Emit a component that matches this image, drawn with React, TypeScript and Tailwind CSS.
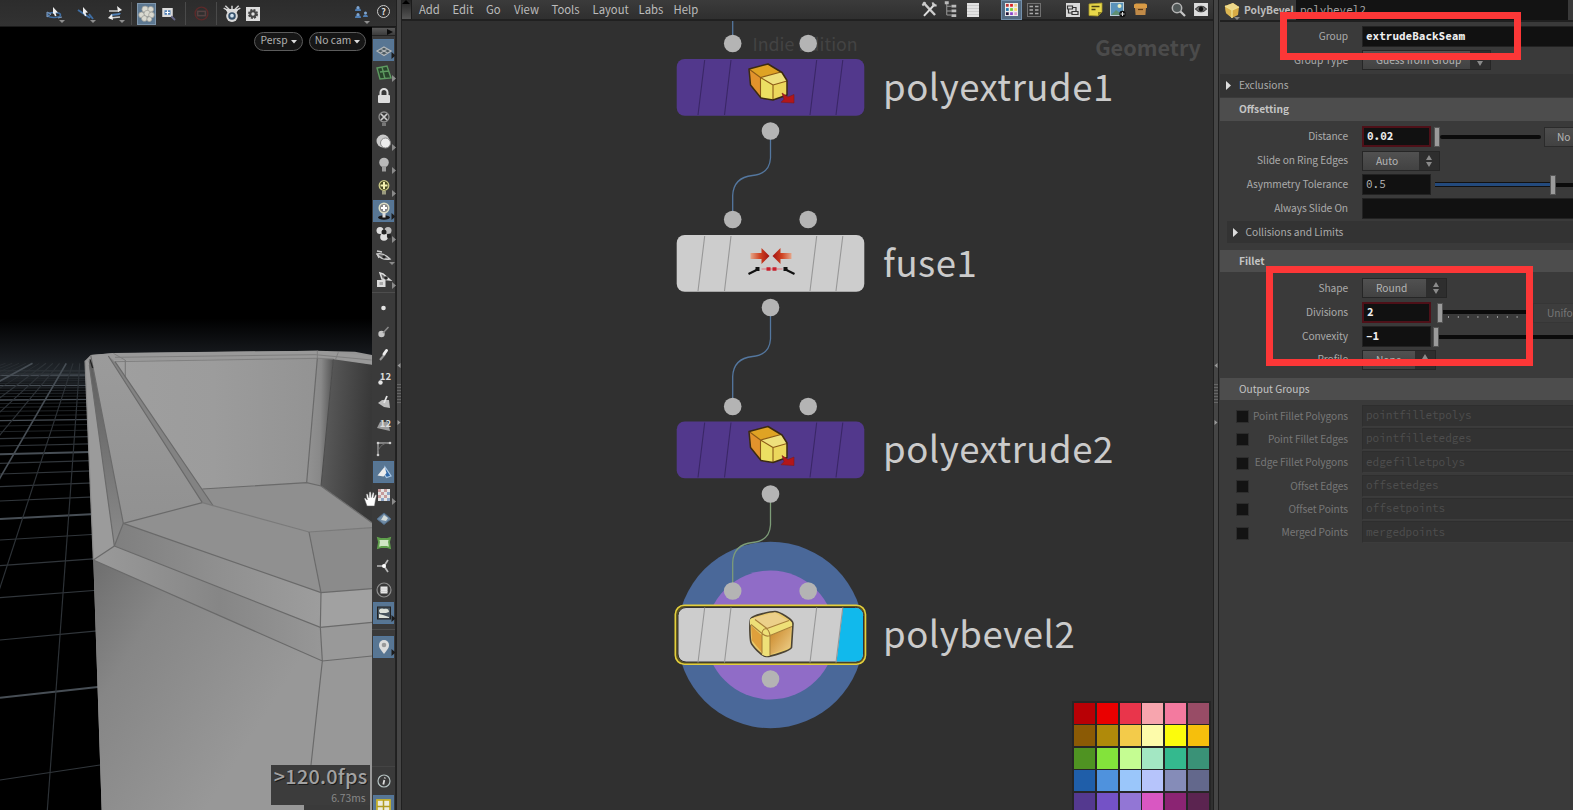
import React from "react";

const sans = "font-['Noto_Sans_CJK_SC','Noto_Sans',sans-serif]";
const mono = "font-['Source_Code_Pro','DejaVu_Sans_Mono',monospace]";

function Ico({ children, s = 20 }: { children: React.ReactNode; s?: number }) {
  return (
    <svg width={s} height={s} viewBox="0 0 24 24" fill="none" className="block shrink-0">
      {children}
    </svg>
  );
}

const blue = "#4f7fb5";
const pale = "#d4d4d4";

/* ------------------------------------------------------------------ */
/* Scene view                                                          */
/* ------------------------------------------------------------------ */

function TopTools() {
  return (
    <div className="flex h-[27px] items-center border-b border-[#1b1b1b] bg-linear-to-b from-[#2c2c2c] to-[#323232] pt-px">
      <div className="ml-[44px] w-[22px]">
        <svg width="24" height="20" viewBox="0 0 24 20" fill="none">
          <ellipse cx="10" cy="11" rx="6.5" ry="2.5" stroke="#3f6ea3" strokeWidth="1.6" />
          <path d="M3 8l4 2-4 3zM14 14l4-1" stroke="#7f9cc0" strokeWidth="1" />
          <path d="M9 3l5 5.500-2.500.2 1 3-1.500.5-1.200-2.800L9 10z" fill="#eee" />
          <path d="M15 16h6l-3 3z" fill="#8f8f8f" />
        </svg>
      </div>
      <div className="ml-[9px] w-[22px]">
        <svg width="24" height="20" viewBox="0 0 24 20" fill="none">
          <path d="M3 6l12 8M14 10l4 5" stroke="#3f6ea3" strokeWidth="2" />
          <path d="M8 3l5 5.500-2.500.2 1 3-1.500.5-1.200-2.800L8 10z" fill="#eee" />
          <path d="M15 16h6l-3 3z" fill="#8f8f8f" />
        </svg>
      </div>
      <div className="ml-[8px] w-[22px]">
        <svg width="24" height="20" viewBox="0 0 24 20" fill="none">
          <path d="M4 7h10M5 14l10-1" stroke="#ccc" strokeWidth="1.5" />
          <path d="M6 12c1-3 8 0 9-3" stroke={blue} strokeWidth="2" />
          <path d="M12 2l5 4-4 2zM7 10l-4 4 5 2z" fill="#eee" />
          <path d="M14 16h6l-3 3z" fill="#8f8f8f" />
        </svg>
      </div>
      <div className="ml-[4px] h-[23px] w-px bg-[#4a4a4a]" />
      <div className="ml-[5px] flex h-[22px] w-[19px] items-center justify-center border border-[#7f97ad] bg-[#5d7891]">
        <Ico s={17}>
          <g fill="#d9d9d0" stroke="#9c9c96" strokeWidth="1">
            <circle cx="10" cy="6" r="4.500" />
            <circle cx="18" cy="6" r="4" />
            <circle cx="5" cy="14" r="4" />
            <circle cx="13" cy="12" r="4.500" />
            <circle cx="19" cy="14" r="4" />
            <circle cx="9" cy="19" r="4" />
            <circle cx="16" cy="20" r="3.500" />
          </g>
        </Ico>
      </div>
      <div className="ml-[4px] w-[20px]">
        <Ico s={18}>
          <path d="M3 4h14v12H3z" fill="#dcdcdc" />
          <path d="M6 7h8v6H6z" fill={blue} />
          <path d="M10 7v6M7 10h6" stroke="#fff" strokeWidth="1.500" />
          <path d="M15 15l5 5" stroke="#668" strokeWidth="2.400" />
        </Ico>
      </div>
      <div className="ml-[5px] h-[23px] w-px bg-[#4a4a4a]" />
      <div className="ml-[7px] w-[18px]">
        <Ico s={17}>
          <circle cx="12" cy="12" r="9" stroke="#5c2a2a" strokeWidth="2" />
          <rect x="6.500" y="9" width="11" height="6" stroke="#554242" strokeWidth="2.200" />
        </Ico>
      </div>
      <div className="ml-[5px] h-[23px] w-px bg-[#4a4a4a]" />
      <div className="ml-[5px] w-[20px]">
        <Ico>
          <path d="M4 2l5 5M20 2l-5 5M2 5l6 3M22 5l-6 3M12 2v5" stroke={pale} strokeWidth="1.800" />
          <path d="M4 6h16l-3 5H7z" fill="#ddd" />
          <circle cx="12" cy="14.500" r="7" fill="#d9d9d9" />
          <circle cx="12" cy="14.500" r="4.500" fill="#35506a" />
          <circle cx="12" cy="14" r="2.200" fill="#cfe0ee" />
        </Ico>
      </div>
      <div className="ml-[4px] w-[16px]">
        <svg width="14" height="14" viewBox="0 0 14 14" fill="none">
          <rect width="14" height="14" fill="#dedede" />
          <circle cx="7" cy="7" r="4" stroke="#444" strokeWidth="2" strokeDasharray="2 1.140" />
          <circle cx="7" cy="7" r="2.700" stroke="#444" strokeWidth="2" />
        </svg>
      </div>
      <div className="ml-[92px] w-[18px]">
        <svg width="20" height="20" viewBox="0 0 20 20">
          <path d="M1 7a3 3 0 016 0zM1 14a3 3 0 016 0zM9 13a2.500 2.500 0 015 0z" fill={blue} />
          <circle cx="4" cy="3.500" r="1.500" fill="#7fa5d0" />
          <circle cx="4" cy="10.500" r="1.500" fill="#7fa5d0" />
          <circle cx="11.500" cy="9" r="1.500" fill="#7fa5d0" />
          <path d="M10 17h6l-3 3z" fill="#8f8f8f" />
        </svg>
      </div>
      <div className={`mb-[4px] ml-[5px] flex h-[13px] w-[13px] items-center justify-center rounded-full border border-[#ccc] ${sans} text-[9px] leading-none font-bold text-[#ddd]`}>
        ?
      </div>
    </div>
  );
}

const rows: [number, number][] = [
  [1440, 1395], [1193, 1160], [1020, 992], [893, 870], [797, 775], [720, 702], [657, 641], [603, 590],
  [560, 548], [522, 512], [490, 481], [463, 455], [438, 431], [416, 409], [395, 390], [378, 373],
  [362, 358], [348, 344], [334, 331], [322, 319], [311, 308], [300, 298], [290, 288], [281, 279],
  [272, 271], [264, 263], [257, 256], [250, 249], [243, 242], [237, 236], [231, 230], [226, 225],
  [221, 220], [216, 215], [212, 211],
];
const bright = new Set([1, 6, 11, 16, 21, 26, 31]);

function Scene() {
  const poly = (p: string, f: string, k: number) => <polygon key={k} points={p} fill={f} />;
  return (
    <svg width="372" height="783" viewBox="0 -819 1116 2349" className="block">
      <defs>
        <linearGradient id="haze" x1="0" y1="0" x2="0" y2="1">
          <stop offset="0" stopColor="#000" />
          <stop offset="0.450" stopColor="#16191d" />
          <stop offset="0.650" stopColor="#20252a" />
          <stop offset="0.850" stopColor="#0e1013" />
          <stop offset="1" stopColor="#000" />
        </linearGradient>
        <linearGradient id="wall" x1="0" y1="0" x2="1" y2="0">
          <stop offset="0" stopColor="#9f9f9f" />
          <stop offset="0.500" stopColor="#9c9c9c" />
          <stop offset="1" stopColor="#939393" />
        </linearGradient>
        <linearGradient id="round" x1="0" y1="0" x2="1" y2="0.080">
          <stop offset="0" stopColor="#949494" />
          <stop offset="0.550" stopColor="#898989" />
          <stop offset="1" stopColor="#545454" />
        </linearGradient>
        <linearGradient id="dark" x1="0" y1="0" x2="1" y2="0.200">
          <stop offset="0" stopColor="#5f5f5f" />
          <stop offset="0.350" stopColor="#515151" />
          <stop offset="1" stopColor="#383838" />
        </linearGradient>
        <linearGradient id="front" x1="0" y1="0" x2="0.800" y2="0.550">
          <stop offset="0" stopColor="#6e6e6e" />
          <stop offset="0.350" stopColor="#868686" />
          <stop offset="1" stopColor="#989898" />
        </linearGradient>
        <linearGradient id="band" x1="0" y1="0" x2="1" y2="0">
          <stop offset="0" stopColor="#7f7f7f" />
          <stop offset="0.450" stopColor="#8e8e8e" />
          <stop offset="1" stopColor="#9d9d9d" />
        </linearGradient>
        <linearGradient id="band2" x1="0" y1="0" x2="1" y2="0">
          <stop offset="0" stopColor="#9a9a9a" />
          <stop offset="0.550" stopColor="#868686" />
          <stop offset="1" stopColor="#979797" />
        </linearGradient>
        <linearGradient id="arm" x1="0" y1="0" x2="0" y2="1">
          <stop offset="0" stopColor="#9b9b9b" />
          <stop offset="1" stopColor="#919191" />
        </linearGradient>
        <linearGradient id="edge" x1="0" y1="0" x2="0" y2="1">
          <stop offset="0" stopColor="#5e5e5e" />
          <stop offset="1" stopColor="#8a8a8a" />
        </linearGradient>
      </defs>
      <rect x="0" y="-819" width="1116" height="2349" fill="#000" />
      <rect x="0" y="55" width="1116" height="240" fill="url(#haze)" />
      {rows.map(([a, b], i) => (
        <line key={a} x1="0" y1={a} x2="300" y2={b} stroke={bright.has(i) ? "#474e55" : "#31363b"} strokeWidth={bright.has(i) ? (i < 12 ? 6 : 4) : i < 14 ? 3.500 : 2} />
      ))}
      {Array.from({ length: 22 }, (_, k) => {
        const dx = 103 + k * 359;
        const t = 80 / 1420;
        return (
          <line key={k} x1={245 - dx} y1="1530" x2={245 - dx * t} y2="190" stroke={k % 5 === 2 ? "#474e55" : "#2d3237"} strokeWidth={k % 5 === 2 ? 5 : k > 5 ? 2 : 3.500} />
        );
      })}
      {[
        ["255,182 272,165 340,160 950,152 1065,155 1116,165 1116,1530 305,1530 280,780", "#959595"],
        ["330,180 375,180 952,175 920,548 607,567", "url(#wall)"],
        ["952,175 1000,178 963,558 920,548", "url(#round)"],
        ["1000,178 1116,194 1116,668 963,558", "url(#dark)"],
        ["272,165 340,159 950,152 1020,158 1116,168 1116,193 1010,177 952,172 375,180 340,178", "#999"],
        ["255,182 268,182 343,738 280,780", "#9b9b9b"],
        ["266,182 278,190 370,670 343,738", "url(#edge)"],
        ["272,165 325,168 607,608 370,670", "url(#arm)"],
        ["325,168 345,185 640,618 607,608", "#838383"],
        ["370,670 607,608 927,696 963,878", "#909090"],
        ["607,567 920,548 963,558 1116,668 1116,683 927,696 640,618", "#8f8f8f"],
        ["927,696 1116,683 1116,866 963,878", "#8b8b8b"],
        ["370,670 963,878 961,982 343,738", "url(#band)"],
        ["963,878 1116,866 1116,967 961,982", "#a1a1a1"],
        ["343,738 961,982 967,1083 280,780", "url(#band2)"],
        ["961,982 1116,967 1116,1068 967,1083", "#999"],
        ["280,780 967,1083 933,1395 915,1530 305,1530", "url(#front)"],
        ["967,1083 1116,1068 1116,1530 915,1530 933,1395", "#989898"],
      ].map(([p, f], i) => poly(p, f, i))}
      <g stroke="#6a6a6a" strokeWidth="3.500" fill="none">
        <path d="M340 160l35 20M345 185l608-10 48 2M952 152v22M1015 157l-8 20M345 172l600-8 170 16" stroke="#7f7f7f" strokeWidth="3" />
        <path d="M376 180v55" stroke="#7a7a7a" />
        <path d="M952 175l-32 373" />
        <path d="M1000 178l-37 380" stroke="#4c4c4c" strokeWidth="3" />
        <path d="M607 567l313-19 43 10 153 110" />
        <path d="M272 165l98 505M268 195l75 543" />
        <path d="M255 182l25 598" stroke="#888" />
        <path d="M270 178l8 26" stroke="#222" strokeWidth="4" />
        <path d="M325 168l282 440M345 185l295 433" />
        <path d="M370 670l237-62" />
        <path d="M607 608l320 88 189-13" stroke="#7a7a7a" />
        <path d="M927 696l36 182" />
        <path d="M370 670l593 208 153-12M370 670l-27 68-63 42M343 738l618 244 155-15" />
        <path d="M280 780l687 303 149-15M963 878l-2 104 6 101-34 312-18 135" />
      </g>
    </svg>
  );
}

const tri = <path d="M20 14v7l4-3.500z" fill="#8b8b8b" />;
const triDark = <path d="M19.500 14v7l4-3.500z" fill="#1c1c1c" />;

const sideA: [boolean, React.ReactNode][] = [
  [true, <g key="a"><path d="M12 9l7 4-7 4.500-7-4.500zM8.500 11l7 4M15.500 11l-7 4" stroke="#b4b8ba" strokeWidth="1.200" fill="#4c5a62" />{triDark}</g>],
  [false, <g key="b"><path d="M5 7l10-2 4 12-11 1zM8 11l9-1M10 6l3 12" stroke="#5d9a60" strokeWidth="1.400" fill="#28442b" />{tri}</g>],
  [false, <g key="c"><path d="M8.500 11V8.500a3.500 3.500 0 017 0V11" stroke="#ddd" strokeWidth="2" /><rect x="6" y="11" width="12" height="8" rx="1" fill="#ddd" /></g>],
  [false, <g key="d"><circle cx="12" cy="10" r="5" stroke="#8e8e8e" strokeWidth="1.300" /><path d="M9 7l6 6M15 7l-6 6" stroke="#ccc" strokeWidth="1.700" /><path d="M10 16h4v3h-4z" fill="#777" /></g>],
  [false, <g key="e"><circle cx="11" cy="11" r="6.500" fill="#c9c9c9" /><circle cx="13.500" cy="13" r="5" fill="#ececec" stroke="#8a8a8a" />{tri}</g>],
  [false, <g key="f"><circle cx="12" cy="9.500" r="4.800" fill="#b9b9b9" /><path d="M10 13h4v5.500h-4z" fill="#9c9c9c" />{tri}</g>],
  [false, <g key="g"><circle cx="12" cy="9.500" r="4.800" fill="#45451f" stroke="#c9c884" strokeWidth="1.300" /><path d="M12 6v7M8.500 9.500h7" stroke="#f2f0b0" strokeWidth="2" /><path d="M10 15h4v3.500h-4z" fill="#9b9b80" />{tri}</g>],
  [true, <g key="h"><circle cx="12" cy="9" r="4.800" fill="#888" stroke="#ddddc4" strokeWidth="1.500" /><path d="M12 6v6M9 9h6" stroke="#fff" strokeWidth="2" /><ellipse cx="12" cy="18.500" rx="6" ry="2.200" fill="#181818" /><path d="M10.500 14h3v4.500h-3z" fill="#ddd" />{triDark}</g>],
  [false, <g key="i"><circle cx="8" cy="8.500" r="3.500" fill="#ddd" /><circle cx="16" cy="8.500" r="3.500" fill="#bbb" /><circle cx="12" cy="15" r="3.800" fill="#ddd" /><circle cx="12" cy="10" r="2.500" fill="#222" /><circle cx="17" cy="14" r="2.200" fill="#222" />{tri}</g>],
  [false, <g key="j"><path d="M5 9c4-1 9 1 13 5-6 1-10-1-13-5z" stroke="#ccc" strokeWidth="1.300" fill="#666" /><circle cx="12" cy="12" r="1.600" fill="#222" /><path d="M5 6l5 1M5 9l2 4" stroke="#ccc" strokeWidth="1.300" /><path d="M17 17h6l-3 3z" fill="#8b8b8b" /></g>],
  [false, <g key="k"><path d="M8 5l3 1 7 6-8-1z" stroke="#ddd" strokeWidth="1.500" fill="#666" /><circle cx="14" cy="10" r="1.800" fill="#222" /><rect x="5" y="12" width="8.500" height="7" fill="#ddd" /><rect x="7.500" y="14" width="3.500" height="3" fill="#aaa" />{tri}</g>],
];

const sideB: [boolean, React.ReactNode][] = [
  [false, <circle key="a" cx="11.500" cy="12" r="2.300" fill="#e4e4e4" />],
  [false, <g key="b"><circle cx="9.500" cy="14" r="3.200" fill="#c5c5c5" /><path d="M11 13l5.500-6" stroke="#8a8a8a" strokeWidth="1.500" /></g>],
  [false, <g key="c"><path d="M8 17l5-6" stroke="#999" strokeWidth="2" /><path d="M12 11l2.500-3.500" stroke="#eee" strokeWidth="3" strokeLinecap="round" /></g>],
  [false, <circle key="d" cx="8.500" cy="15.500" r="2.200" fill="#e4e4e4" />],
  [false, <g key="e"><path d="M6 13l4-3 7 0 1 8-6-1z" fill="#bdbdbd" /><path d="M12 13l3-7" stroke="#e4e4e4" strokeWidth="1.800" /></g>],
  [false, <path key="f" d="M8 9l8 0 2 9-13-3z" fill="#9c9c9c" />],
  [false, <g key="g"><path d="M6 18V6h12" stroke="#9b9b9b" strokeWidth="1.400" /><path d="M6 14c2-5 5-7 9-8" stroke="#6f6f6f" /><circle cx="6" cy="6" r="1.300" fill="#ccc" /><circle cx="18" cy="6" r="1.300" fill="#ccc" /><circle cx="6" cy="18" r="1.300" fill="#ccc" /></g>],
  [true, <g key="h"><path d="M13 7l6 9-4.500 1.500-2-3z" fill="#2f68a8" stroke="#a9c8e6" strokeWidth="1.200" /><path d="M5.500 15.500l7-8.500 2 6-3 3.500z" fill="#ececec" /></g>],
  [false, <g key="i"><rect x="6" y="5" width="12" height="12" fill="#e2e2e2" /><path d="M6 5h3v3H6zM12 5h3v3h-3zM9 8h3v3H9zM6 11h3v3H6zM12 11h3v3h-3z" fill="#c49a9c" /><path d="M15 8h3v3h-3zM15 14h3v3h-3zM9 14h3v3H9z" fill="#8da4c4" />{tri}</g>],
  [false, <g key="j"><path d="M12 6l7 6-7 5.500L5 12z" fill="#6f8ba5" stroke="#4f6a86" /><path d="M12 8l4 3-2 3-5-1z" fill="#d4dbd9" /></g>],
  [false, <g key="k"><path d="M6 7l3.500 1h5L18 7l-1 4 1 6-3.500-1h-5L6 17l1-6z" fill="#cfe6c4" stroke="#5f9f4c" strokeWidth="1.800" /></g>],
  [false, <g key="l"><path d="M5 12h7M12 12l4-6M12 12l4 6" stroke="#b8b8b8" strokeWidth="1.700" /><circle cx="12" cy="12" r="2" fill="#fff" /></g>],
  [false, <g key="m"><circle cx="12" cy="12" r="7" stroke="#8d8d8d" strokeWidth="1.200" /><path d="M8.500 8.500h7v7h-7z" fill="#e6e6e6" /><path d="M8.500 11h7M8.500 13.500h7" stroke="#ccc" strokeWidth=".8" /></g>],
  [true, <g key="n"><rect x="5.500" y="6" width="13" height="12" fill="#46535c" stroke="#222" /><path d="M7 10c0-3 4-3 5-2 3-1 5 0 5 3l-3 1H8zM7 17v-4l4 1 6 2v1z" fill="#dbe0d8" />{triDark}</g>],
];

function SideCell({ on, h, children }: { on: boolean; h: string; children: React.ReactNode }) {
  return (
    <div className={`flex shrink-0 items-center justify-center ${h}`}>
      <div className={`flex h-[22px] w-[21px] items-center justify-center ${on ? "border border-[#54779b] bg-[#587693]" : ""}`}>
        <Ico s={24}>{children}</Ico>
      </div>
    </div>
  );
}

function SideBar() {
  return (
    <div className="flex w-[24px] flex-col border-r border-[#222] bg-[#3a3a3a]">
      <div className="flex h-[9px] items-center justify-end border-y border-[#222] bg-linear-to-b from-[#5a5a5a] to-[#3c3c3c] pr-[2px]">
        <svg width="6" height="6"><path d="M0 0l6 3-6 3z" fill="#0c0c0c" /></svg>
      </div>
      <div className="h-[2px]" />
      {sideA.map(([on, g], i) => <SideCell key={i} on={on} h="h-[23.100px]">{g}</SideCell>)}
      <div className="mb-[3.500px] h-px bg-[#4d4d4d]" />
      {sideB.map(([on, g], i) =>
        i === 3 || i === 5 ? (
          <div key={i} className="relative flex h-[23.450px] shrink-0 items-center justify-center">
            <Ico s={24}>{g}</Ico>
            <span className={`absolute top-[2px] right-[4px] ${sans} text-[9.500px] leading-[14px] font-bold text-[#ddd]`}>12</span>
          </div>
        ) : (
          <SideCell key={i} on={on} h="h-[23.450px]">{g}</SideCell>
        ),
      )}
      <div className="mt-[4px] mb-[6px] h-px bg-[#4d4d4d]" />
      <SideCell on h="h-[23px]">
        <path d="M12 19c-4-5-5-6.500-5-9a5 5 0 0110 0c0 2.500-1 4-5 9z" fill="#dcdcdc" />
        <circle cx="12" cy="10" r="2.300" fill="#999" />
        {triDark}
      </SideCell>
      <div className="flex-1" />
      <div className="h-px bg-[#444]" />
      <div className="flex h-[28px] shrink-0 items-center justify-center">
        <svg width="16" height="16" viewBox="0 0 16 16" fill="none">
          <circle cx="8" cy="8" r="6" stroke="#b5c2c2" strokeWidth="1.200" />
          <path d="M9 4.500l-.3 1M8.300 7l-1 4.500" stroke="#ddd" strokeWidth="1.800" />
        </svg>
      </div>
      <div className="flex h-[15px] shrink-0 items-start justify-center overflow-hidden">
        <div className="flex h-[24px] w-[21px] shrink-0 justify-center border border-[#54779b] bg-[#587693] pt-[3px]">
          <svg width="15" height="15" viewBox="0 0 15 15">
            <rect x="1" y="1" width="13" height="13" fill="#ececdc" stroke="#c9b32c" strokeWidth="1.800" />
            <path d="M7.500 1v13M1 7.500h13" stroke="#b09c22" strokeWidth="1.500" />
          </svg>
        </div>
      </div>
    </div>
  );
}

function Pill({ label, w }: { label: string; w: string }) {
  return (
    <div className={`flex h-[19px] ${w} items-center justify-center gap-[3px] rounded-full border-[1.500px] border-[#5c5c5c] bg-[#161616] ${sans} text-[10.300px] leading-none text-[#b0b0b0]`}>
      <span className="-mt-[2px]">{label}</span>
      <svg width="6" height="4"><path d="M0 0h6l-3 3.500z" fill="#ddd" /></svg>
    </div>
  );
}

function SceneView() {
  return (
    <div className="flex w-[396px] shrink-0 flex-col">
      <TopTools />
      <div className="flex h-[783px]">
        <div className="relative h-[783px] w-[372px] overflow-hidden">
          <Scene />
          <div className="absolute top-[5px] left-[254px] flex gap-[6px]">
            <Pill label="Persp" w="w-[49px]" />
            <Pill label="No cam" w="w-[57px]" />
          </div>
          <div className={`absolute top-[738px] left-[270.500px] h-[40px] w-[99px] bg-[#3c3c3c] ${sans} text-[#a2a2a2]`}>
            <div className="absolute top-[-1px] right-[2px] text-[19.800px] leading-[24px] font-medium tracking-[0.300px] [text-shadow:1px_1px_0_#1a1a1a]">&gt;120.0fps</div>
            <div className="absolute right-[4px] bottom-[0px] text-[10.300px] leading-[14px] text-[#888]">6.73ms</div>
          </div>
          <div className="absolute top-[778px] left-[304px] h-[5px] w-[66px] bg-[#3a3a3a]" />
        </div>
        <SideBar />
      </div>
      <svg width="14" height="16" viewBox="0 0 14 16" className="absolute top-[491px] left-[364px]">
        <path d="M3 15L1 9.500.3 7.500c.6-.8 1.500-.3 2.200.7L3.300 9 2.200 3.500c.5-1.200 1.500-.8 1.800.2L5 6.800 5.200 1.500c.6-1 1.600-.8 1.800.2l.3 4.800L8.500 2c.8-.8 1.600-.4 1.600.6L9.600 7l1.600-3c.9-.6 1.500 0 1.300.8L11.300 10 10.500 15z" fill="#fff" stroke="#555" strokeWidth=".5" />
      </svg>
    </div>
  );
}

function Divider() {
  return (
    <div className="flex w-[6px] shrink-0 items-center justify-center border-x border-[#202020] bg-[#454545]">
      <svg width="4" height="62" viewBox="0 0 4 62" className="-mt-[22px]">
        <path d="M3.500 0v5L.5 2.500zM.5 57v5l3-2.500z" fill="#999" />
        <path d="M1 21v20M3 21v20" stroke="#888" strokeDasharray="1 2" />
      </svg>
    </div>
  );
}

/* ------------------------------------------------------------------ */
/* Network editor                                                      */
/* ------------------------------------------------------------------ */

const menus: [string, string][] = [
  ["Add", "w-[33.500px]"], ["Edit", "w-[33.500px]"], ["Go", "w-[28px]"], ["View", "w-[37.500px]"],
  ["Tools", "w-[41px]"], ["Layout", "w-[46px]"], ["Labs", "w-[35px]"], ["Help", "w-[40px]"],
];

function MenuBar() {
  return (
    <div className="flex h-[21px] shrink-0 border-b-2 border-[#202020] bg-linear-to-b from-[#3b3b3b] to-[#2f2f2f]">
      <div className="mr-[7px] w-[10px] border-r border-[#1b1b1b] bg-linear-to-b from-[#222] to-[#555]">
        <svg width="8" height="5"><path d="M0 4l4-4 4 4z" fill="#000" /></svg>
      </div>
      {menus.map(([m, w]) => (
        <div key={m} className={`${w} shrink-0 ${sans} text-[11.300px] leading-[18px] text-[#bcbcbc]`}>{m}</div>
      ))}
      <div className="ml-[206px] flex h-[19px] items-center">
        <Ico s={19}>
          <path d="M4 3l15 16" stroke="#ccc" strokeWidth="3" />
          <path d="M19 5L5 20" stroke="#ddd" strokeWidth="2.500" />
          <path d="M3 7l4-4M16 3l1 4 4 0" stroke="#ccc" strokeWidth="2.500" />
        </Ico>
        <div className="ml-[3.500px]">
          <Ico s={19}>
            <path d="M6 4v15M6 8h6M6 14h6M6 19h6" stroke="#999" strokeWidth="1.300" />
            <path d="M3.500 1.500h5v4h-5zM12 6h6v3.500h-6zM12 12h6v3.500h-6zM12 18h6v3.500h-6z" fill="#bbb" />
          </Ico>
        </div>
        <div className="ml-[6px] flex h-[14px] w-[12px] flex-col justify-evenly bg-[#e2e2e2]">
          <i className="h-px bg-[#ccc]" /><i className="h-px bg-[#ccc]" /><i className="h-px bg-[#ccc]" /><i className="h-px bg-[#ccc]" />
        </div>
        <div className="ml-[22px] flex h-[20px] w-[21px] items-center justify-center border border-[#7490ab] bg-[#536b82]">
          <svg width="13" height="13" viewBox="0 0 14 14">
            <rect width="14" height="14" fill="#eee" />
            <path d="M1 1h3v3H1z" fill="#b33" /><path d="M5.500 1h3v3h-3z" fill="#d22" /><path d="M10 1h3v3h-3z" fill="#ec8" />
            <path d="M1 5.500h3v3H1z" fill="#27a" /><path d="M5.500 5.500h3v3h-3z" fill="#7c3" /><path d="M10 5.500h3v3h-3z" fill="#fd6" />
            <path d="M1 10h3v3H1z" fill="#213" /><path d="M5.500 10h3v3h-3z" fill="#84c" /><path d="M10 10h3v3h-3z" fill="#d9c" />
          </svg>
        </div>
        <svg width="14" height="14" viewBox="0 0 14 14" fill="none" className="ml-[5px]">
          <rect x=".5" y=".5" width="13" height="13" stroke="#707070" />
          <path d="M2.500 3.500h3.500M2.500 7h3.500M2.500 10.500h3.500M8 3.500h3.500M8 7h3.500M8 10.500h3.500" stroke="#aaa" strokeWidth="1.500" />
        </svg>
        <svg width="14" height="14" viewBox="0 0 14 14" fill="none" className="ml-[24.500px]">
          <rect width="14" height="14" fill="#d8d8d8" />
          <path d="M1.500 3h5v3h-5zM6 8.500h6v3H6zM6.500 4.500H10V8M6 10H2.500V6.500" stroke="#333" strokeWidth="1.200" />
        </svg>
        <svg width="15" height="15" viewBox="0 0 15 15" className="ml-[8px]">
          <path d="M1 2l13-1v9l-4 4-9-.5z" fill="#e8d84a" stroke="#a8992c" strokeWidth=".8" />
          <path d="M3.500 4.500h8M3.500 7.500h4" stroke="#4b4415" strokeWidth="1.400" />
          <path d="M14 10h-4v4z" fill="#8f8220" />
        </svg>
        <svg width="16" height="17" viewBox="0 0 16 17" className="ml-[7.500px]">
          <rect x=".5" y="1.500" width="13" height="13" fill="#5a93bb" stroke="#b9ccd8" />
          <path d="M1 14l5-5 4 3 3-3v5z" fill="#5f8f73" />
          <circle cx="9.500" cy="5" r="2" fill="#e9efc2" />
          <circle cx="12.500" cy="13" r="3.200" fill="#111" />
          <path d="M12.500 11v4M10.500 13h4" stroke="#ddd" />
        </svg>
        <svg width="15" height="13" viewBox="0 0 15 13" className="ml-[7px]">
          <path d="M1 1.500L3 .5h9l2 1V5H1z" fill="#d99b45" />
          <path d="M2 5h11l-.6 7H2.600z" fill="#c08a48" />
          <path d="M5 6.500h5" stroke="#603b10" strokeWidth="1.200" />
        </svg>
        <svg width="15" height="15" viewBox="0 0 15 15" fill="none" className="ml-[23px]">
          <circle cx="6" cy="6" r="4.700" stroke="#b5b5b5" strokeWidth="1.500" fill="#515858" />
          <path d="M9.500 9.500L14 14" stroke="#c5c5c5" strokeWidth="2.300" />
        </svg>
        <svg width="14" height="13" viewBox="0 0 15 14" className="ml-[8px]">
          <rect width="15" height="14" fill="#ddd" />
          <path d="M1.500 6.500c3-4 9-4 12 0-3 4-9 4-12 0z" fill="#777" stroke="#222" />
          <circle cx="7.500" cy="6.500" r="2.500" fill="#111" />
        </svg>
      </div>
    </div>
  );
}

function ExtrudeIcon() {
  return (
    <g strokeLinejoin="round">
      <path d="M0 5L19 0l14 8.500 5 8V31L24 36l-12-2L1.500 21z" fill="#ecd75c" />
      <path d="M0 5L19 0l14 8.500L11.500 13.500z" fill="#dfa324" />
      <path d="M0 5l11.500 8.500V34L1.500 21z" fill="#e2932c" />
      <path d="M11.500 13.500L32 8l6 9.500L24 21z" fill="#eee07c" />
      <path d="M11.500 13.500L24 21v15l-12-2z" fill="#ecdf62" />
      <path d="M0 5l11.500 8.500L32 8M11.500 13.500V34M11.500 13.500L24 21l14-4M24 21v15" fill="none" stroke="#8c5a16" strokeWidth="1.100" />
      <path d="M0 5L19 0l14 8.500 5 8V31L24 36l-12-2L1.500 21z" fill="none" stroke="#3b2a10" strokeWidth="1.500" />
      <path d="M33 29l6 4 6-2.500v8.500l-13-.8 3-3z" fill="#b3161a" stroke="#7c1d1d" strokeWidth=".6" />
    </g>
  );
}

function FuseIcon() {
  return (
    <g>
      <path d="M2 5h11V0l8 8-8 8v-5H2z" fill="url(#fr)" />
      <path d="M43 5H32V0l-8 8 8 8v-5h11z" fill="url(#fl)" />
      <path d="M0 26l9-4.500M46 26l-9-4.500" stroke="#111" strokeWidth="2.200" />
      <path d="M7 19h4v4H7zM35 19h4v4h-4z" fill="#111" />
      <path d="M13 21h21" stroke="#d98a90" strokeWidth="1.300" />
      <path d="M18 19.200h4v3.500h-4zM24 19.200h4v3.500h-4z" fill="#c8202e" />
    </g>
  );
}

function BevelIcon() {
  return (
    <g strokeLinejoin="round">
      <path d="M2 7C3 4 22 0 26 0s18 8 18 12l-1.500 24c-1 3-20 9-25 9S3 34 2 31 0 10 2 7z" fill="#e9c96a" stroke="#4c4434" strokeWidth="1.600" />
      <path d="M3 7L26 1l17 11-23 7z" fill="#ecd08a" />
      <path d="M2 13l11 8v20L3 29z" fill="#dfa03c" />
      <path d="M21 24l21-8-1 20-20 7z" fill="url(#bv)" />
      <path d="M1 8q2-3 5 0l12 10 21-9q5 1 4 6L21 24v20q-4 2-8-1V24L1 13z" fill="#eee078" />
      <path d="M6 8l12 9 22-8M13 22l-11-9M21 24l22-9M13 22v20M21 24v20M13 22q4 4 8 2-1-6-4-7-4 1-4 5" fill="none" stroke="#a9813a" strokeWidth="1.100" />
    </g>
  );
}

const nodes = [
  { name: "polyextrude1", y: 59, top: 43.5, out: 131, fill: "#52388c", kind: "extrude", label: "top-[61px]" },
  { name: "fuse1", y: 235, top: 219.5, out: 307.5, fill: "#cdcdcd", kind: "fuse", label: "top-[237px]" },
  { name: "polyextrude2", y: 421.500, top: 406.5, out: 494, fill: "#52388c", kind: "extrude", label: "top-[423px]" },
  { name: "polybevel2", y: 606.500, top: 591, out: 679, fill: "#cdcdcd", kind: "bevel", label: "top-[608px]" },
];

const palette = [
  ["bg-[#b80005]", "bg-[#ea0000]", "bg-[#e9354b]", "bg-[#f7a5ae]", "bg-[#f37a9f]", "bg-[#984c66]"],
  ["bg-[#8b5a05]", "bg-[#b08a0a]", "bg-[#f3cb4a]", "bg-[#fdfbaa]", "bg-[#fcfc0c]", "bg-[#f6bf0c]"],
  ["bg-[#4f9322]", "bg-[#83e33b]", "bg-[#c5fd92]", "bg-[#a3e7c3]", "bg-[#34b98e]", "bg-[#3a9277]"],
  ["bg-[#1f5ea9]", "bg-[#4f92dd]", "bg-[#9ac6fa]", "bg-[#b6c4fb]", "bg-[#858cb8]", "bg-[#63688c]"],
  ["bg-[#54398f]", "bg-[#7452c6]", "bg-[#9276d5]", "bg-[#d957c2]", "bg-[#8b2473]", "bg-[#5b2450]"],
];

function Network() {
  return (
    <div className="relative flex-1 overflow-hidden bg-[#303030]">
      <div className="absolute -top-[21px] -left-[402px] h-[810px] w-[1213px]">
        <div className={`absolute top-[31px] left-[752.500px] ${sans} text-[17.800px] leading-[24px] text-[#434343]`}>Indie Edition</div>
        <div className={`absolute top-[34px] right-[12px] ${sans} text-[21.600px] leading-[26px] font-bold text-[#4b4b4b]`}>Geometry</div>
        <svg width="1213" height="810" viewBox="0 0 1213 810" className="absolute top-0 left-0" fill="none">
          <defs>
            <linearGradient id="fr"><stop offset="0" stopColor="#e5a68a" /><stop offset=".5" stopColor="#cf4322" /><stop offset="1" stopColor="#a31212" /></linearGradient>
            <linearGradient id="fl"><stop offset="0" stopColor="#a31212" /><stop offset=".5" stopColor="#cf4322" /><stop offset="1" stopColor="#e5a68a" /></linearGradient>
            <linearGradient id="bv" x1="0" y1="0" x2="1" y2="1"><stop offset="0" stopColor="#c98424" /><stop offset="1" stopColor="#efd28e" /></linearGradient>
          </defs>
          <circle cx="770.500" cy="635" r="93.200" fill="#4a6899" />
          <circle cx="770.500" cy="635" r="64.500" fill="#906cc7" />
          <g strokeWidth="1.300" stroke="#54779f">
            <path d="M732.700 21v22" />
            <path d="M770.500 131v27q-1 16-18 17.500-19 2-19.800 20V219" />
            <path d="M770.500 307v32q-1 16-18 17.500-19 2-19.800 20V406" />
            <path d="M770.500 494v31q-1 16-18 17.500-19 2-19.800 20V590" stroke="#7d9c78" />
          </g>
          {nodes.map((n) => (
            <g key={n.name}>
              <circle cx="732.700" cy={n.top} r="8.800" fill="#b4b4b4" />
              <circle cx="808.200" cy={n.top} r="8.800" fill="#b4b4b4" />
              <circle cx="770.500" cy={n.out} r="8.800" fill="#b4b4b4" />
              {n.kind === "bevel" && <rect x="675.300" y="605.300" width="190.200" height="59" rx="9" fill="#5b5320" stroke="#e3cf3c" strokeWidth="1.600" />}
              <g transform={`translate(0 ${n.y})`}>
                <rect x={n.kind === "bevel" ? 678 : 676.7} y={n.kind === "bevel" ? 1 : 0} width={n.kind === "bevel" ? 185.5 : 187.6} height={n.kind === "bevel" ? 54.500 : 56.800} rx="8" fill={n.fill} stroke={n.kind === "bevel" ? "#333" : "none"} />
                {n.kind === "bevel" && <path d="M843 1.500h12.500q7.500 0 7.500 8v37.500q0 8-7.500 8H836.500z" fill="#11b9ec" />}
                <path d="M704.700 1L698 56M731 1l-6.500 55M816.700 1L810 56M842.800 1L836 56" stroke={n.kind === "extrude" ? "#3a2766" : "#979797"} strokeWidth="1.100" />
                <g transform={n.kind === "extrude" ? "translate(749 5)" : n.kind === "fuse" ? "translate(748.500 13)" : "translate(749 5)"}>
                  {n.kind === "extrude" ? <ExtrudeIcon /> : n.kind === "fuse" ? <FuseIcon /> : <BevelIcon />}
                </g>
              </g>
            </g>
          ))}
        </svg>
        {nodes.map((n) => (
          <div key={n.name} className={`absolute left-[883px] ${n.label} ${sans} text-[36.600px] leading-[50px] tracking-[0.500px] text-[#cbcbcb]`}>{n.name}</div>
        ))}
        <div className="absolute top-[700.500px] left-[1072px] grid grid-cols-[repeat(6,21px)] grid-rows-[repeat(5,21px)] gap-x-[1.800px] gap-y-[1.600px] border-2 border-[#262626] bg-[#262626]">
          {palette.flat().map((c) => <div key={c} className={c} />)}
        </div>
      </div>
    </div>
  );
}

/* ------------------------------------------------------------------ */
/* Parameters                                                          */
/* ------------------------------------------------------------------ */

function Row({ label, h, dim, children }: { label: string; h: string; dim?: boolean; children?: React.ReactNode }) {
  return (
    <div className={`flex shrink-0 items-center ${h}`}>
      <div className={`w-[129px] shrink-0 pr-px text-right ${sans} text-[10.200px] leading-none tracking-[-0.080px] ${dim ? "text-[#777]" : "text-[#ababab]"}`}>{label}</div>
      <div className="w-[13px] shrink-0" />
      {children}
    </div>
  );
}

function Field({ value, w, bold, hot, dim }: { value?: string; w: string; bold?: boolean; hot?: boolean; dim?: boolean }) {
  return (
    <div className={`flex shrink-0 items-center border pl-[3px] ${w} ${dim ? "h-[22px] border-[#2e2e2e] border-b-[#3c3c3c] bg-[#323232] text-[#4e4e4e]" : "h-[21px] bg-[#111]"} ${hot ? "border-2 border-[#4e1018] pl-[2px]" : dim ? "" : "border-[#222]"} ${mono} text-[11px] leading-none ${bold ? "font-bold text-[#eee]" : dim ? "" : "text-[#bbb]"}`}>
      {value}
    </div>
  );
}

function Select({ value, w }: { value: string; w: string }) {
  return (
    <div className={`flex h-[20px] shrink-0 border border-[#262626] ${w}`}>
      <div className={`flex-1 bg-linear-to-b from-[#515151] to-[#424242] pl-[13px] ${sans} text-[10.200px] leading-[17px] text-[#b5b5b5]`}>{value}</div>
      <div className="flex w-[20px] items-center justify-center bg-[#2e2e2e]">
        <svg width="6" height="12"><path d="M0 5l3-5 3 5zM0 7h6l-3 5z" fill="#8a8a8a" /></svg>
      </div>
    </div>
  );
}

function Handle() {
  return <div className="h-[20px] w-[6px] shrink-0 border border-[#555] bg-[#9b9b9b]" />;
}

function Head({ label, h, bold }: { label: string; h: string; bold?: boolean }) {
  return (
    <div className={`flex shrink-0 items-center bg-[#4d4d4d] pl-[19px] ${h} ${sans} text-[10.200px] leading-none ${bold ? "font-bold" : ""} text-[#c4c4c4]`}>{label}</div>
  );
}

function Fold({ label, cls }: { label: string; cls: string }) {
  return (
    <div className={`flex shrink-0 items-center gap-[8px] bg-[#333] pl-[6px] ${cls} ${sans} text-[10.200px] leading-none text-[#ababab]`}>
      <svg width="5" height="9"><path d="M0 0l5 4.500L0 9z" fill="#ddd" /></svg>
      {label}
    </div>
  );
}

const outputs = [
  ["Point Fillet Polygons", "pointfilletpolys"],
  ["Point Fillet Edges", "pointfilletedges"],
  ["Edge Fillet Polygons", "edgefilletpolys"],
  ["Offset Edges", "offsetedges"],
  ["Offset Points", "offsetpoints"],
  ["Merged Points", "mergedpoints"],
];

function Params() {
  return (
    <div className="flex w-[354px] shrink-0 flex-col overflow-hidden bg-[#3a3a3a] pl-px">
      <div className="flex h-[22px] shrink-0 border-b-2 border-[#202020]">
        <svg width="19" height="20" viewBox="0 0 19 20" className="ml-[3px]">
          <path d="M2 6l8-3 6 4-1 8-6 3-6-5z" fill="#d8ab45" />
          <path d="M2 6l8-3 6 4-7 3z" fill="#efd98b" />
          <path d="M9 10v8l-6-5-1-7z" fill="#dcb652" />
          <path d="M2 6l7 4 7-3M9 10v8" stroke="#f0e08f" strokeWidth="1.300" fill="none" />
          <path d="M11 17h6l-3 3z" fill="#8b8b8b" />
        </svg>
        <div className={`ml-[2px] w-[51px] ${sans} text-[10.200px] leading-[19px] font-bold whitespace-nowrap text-[#bdbdbd]`}>PolyBevel</div>
        <div className={`ml-px h-[20px] w-[272px] bg-[#131313] pl-[4px] ${mono} text-[11px] leading-[21px] text-[#aaa]`}>polybevel2</div>
      </div>
      <div className="h-[3.500px] shrink-0" />
      <Row label="Group" h="h-[22px]"><Field value="extrudeBackSeam" w="w-[240px]" bold /></Row>
      <div className="h-[2px] shrink-0" />
      <Row label="Group Type" h="h-[21px]"><Select value="Guess from Group" w="w-[129px]" /></Row>
      <div className="h-[3px] shrink-0" />
      <Fold label="Exclusions" cls="h-[23px]" />
      <div className="h-[1.500px] shrink-0" />
      <Head label="Offsetting" h="h-[22.500px]" bold />
      <div className="h-[4px] shrink-0" />
      <Row label="Distance" h="h-[24px]">
        <Field value="0.02" w="w-[69px]" bold hot />
        <div className="ml-[3px]"><Handle /></div>
        <div className="h-[4px] w-[101px] shrink-0 rounded-full bg-[#0b0b0b]" />
        <div className={`ml-[3px] h-[20px] w-[60px] shrink-0 border border-[#2b2b2b] bg-linear-to-b from-[#4d4d4d] to-[#424242] pl-[12px] ${sans} text-[10.200px] leading-[17px] text-[#b5b5b5]`}>No</div>
      </Row>
      <Row label="Slide on Ring Edges" h="h-[24px]"><Select value="Auto" w="w-[78px]" /></Row>
      <Row label="Asymmetry Tolerance" h="h-[24px]">
        <Field value="0.5" w="w-[69px]" />
        <div className="ml-[4px] h-[5px] w-[114.500px] shrink-0 border-y border-[#111] bg-[#234a7d]" />
        <Handle />
        <div className="h-[4px] w-[30px] shrink-0 bg-[#0b0b0b]" />
      </Row>
      <Row label="Always Slide On" h="h-[24px]"><Field w="w-[240px]" /></Row>
      <div className="h-[0.500px] shrink-0" />
      <Fold label="Collisions and Limits" cls="ml-[6.500px] h-[22px]" />
      <div className="h-[6.500px] shrink-0" />
      <Head label="Fillet" h="h-[22.500px]" bold />
      <div className="h-[4px] shrink-0" />
      <Row label="Shape" h="h-[24px]"><Select value="Round" w="w-[85px]" /></Row>
      <Row label="Divisions" h="h-[25px]">
        <Field value="2" w="w-[69px]" bold hot />
        <div className="ml-[6px]"><Handle /></div>
        <div className="mt-[5px] w-[83px] shrink-0">
          <div className="h-[4px] bg-[#0b0b0b]" />
          <svg width="83" height="4" className="mt-[2px] block"><path d="M5 1h78" stroke="#999" strokeWidth="2" strokeDasharray="1 8.800" /></svg>
        </div>
        <div className={`ml-[7px] h-[20px] w-[60px] shrink-0 border border-[#363636] bg-[#3d3d3d] pl-[13px] ${sans} text-[10.200px] leading-[17px] text-[#777]`}>Unifo</div>
      </Row>
      <Row label="Convexity" h="h-[23px]">
        <Field value="-1" w="w-[69px]" bold />
        <div className="ml-[2px]"><Handle /></div>
        <div className="h-[4px] w-[140px] shrink-0 bg-[#0b0b0b]" />
      </Row>
      <Row label="Profile" h="h-[23px]"><Select value="None" w="w-[74px]" /></Row>
      <div className="h-[6.500px] shrink-0" />
      <Head label="Output Groups" h="h-[22.500px]" />
      <div className="h-[4px] shrink-0" />
      {outputs.map(([l, v]) => (
        <div key={l} className="flex h-[23.330px] shrink-0 items-center">
          <div className="mt-[2px] -mr-[29px] ml-[16px] h-[13px] w-[13px] shrink-0 border border-[#2d2d2d] bg-[#131313]" />
          <Row label={l} h="h-[23px]" dim><Field value={v} w="w-[240px]" dim /></Row>
        </div>
      ))}
    </div>
  );
}

export default function App() {
  return (
    <div className="relative flex h-[810px] w-[1573px] overflow-hidden bg-[#303030]">
      <SceneView />
      <Divider />
      <div className="flex w-[811px] shrink-0 flex-col">
        <MenuBar />
        <Network />
      </div>
      <Divider />
      <Params />
      <div className="absolute top-[12px] left-[1280px] h-[48px] w-[241px] border-[7px] border-[#fc3737]" />
      <div className="absolute top-[266px] left-[1266px] h-[100px] w-[267px] border-[7px] border-[#fc3737]" />
    </div>
  );
}
